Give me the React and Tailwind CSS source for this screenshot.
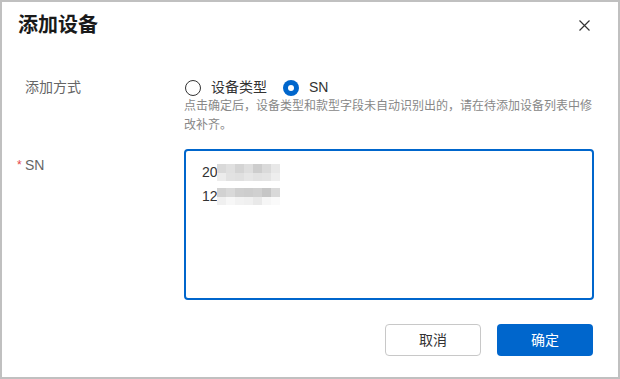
export default function App() {
  const font = { fontFamily: '"Liberation Sans", "Noto Sans CJK SC", sans-serif' };
  const blur1 = ["#d9d9d9", "#e0e0e0", "#d4d4d4", "#dedede", "#cdcdcd", "#dadada", "#e8e8e8"];
  const blur1b = ["#ececec", "#e2e2e2", "#e0e0e0", "#e6e6e6", "#e2e2e2", "#e4e4e4", "#eeeeee"];
  const blur2 = ["#d2d2d2", "#d9d9d9", "#cfcfcf", "#cdcdcd", "#d0d0d0", "#c6c6c6", "#d9d9d9"];
  const blur2b = ["#f0f0f0", "#f7f7f7", "#f2f2f2", "#f0f0f0", "#e9e9e9", "#f6f6f6", "#fafafa"];

  const Blur = ({ top, bottom }) => (
    <span className="inline-flex flex-col -ml-[1px] align-middle">
      <span className="flex">
        {top.map((c, i) => (
          <span key={i} className="w-[9px] h-[9px]" style={{ background: c }} />
        ))}
      </span>
      <span className="flex">
        {bottom.map((c, i) => (
          <span key={i} className="w-[9px] h-[8px]" style={{ background: c }} />
        ))}
      </span>
    </span>
  );

  return (
    <div
      className="w-[620px] h-[379px] border-2 border-[#c0c0c0] bg-white flex flex-col text-[#333]"
      style={font}
    >
      <div className="flex items-center justify-between pl-[16px] pr-[28px] pt-[10px] h-[48px] shrink-0">
        <div className="text-[20px] leading-[28px] font-bold text-[#1a1a1a] -mt-[12px]">添加设备</div>
        <svg width="11" height="11" viewBox="0 0 11 11" className="-mt-[12px]">
          <path d="M0.5 0.5 L10.5 10.5 M10.5 0.5 L0.5 10.5" stroke="#333" strokeWidth="1.2" />
        </svg>
      </div>

      <div className="flex mt-[28px]">
        <div className="w-[182px] shrink-0 pl-[23px] text-[14px] leading-[19px] text-[#666]">添加方式</div>
        <div className="flex flex-col">
          <div className="flex items-center h-[19px] text-[14px] text-[#333]">
            <span className="w-[16px] h-[16px] rounded-full border-[1.5px] border-[#333] ml-[1px]" />
            <span className="ml-[10px]">设备类型</span>
            <span className="w-[16px] h-[16px] rounded-full bg-[#0066cc] flex items-center justify-center ml-[16px]">
              <span className="w-[6px] h-[6px] rounded-full bg-white" />
            </span>
            <span className="ml-[10px]">SN</span>
          </div>
          <div className="whitespace-nowrap text-[12px] leading-[19px] text-[#888]">
            点击确定后，设备类型和款型字段未自动识别出的，请在待添加设备列表中修
            <br />
            改补齐。
          </div>
        </div>
      </div>

      <div className="flex mt-[14px]">
        <div className="w-[182px] shrink-0 pl-[15px] pt-[6px] text-[14px] leading-[20px] text-[#666] flex">
          <span className="w-[8px] text-[#e54545] text-[12px]">*</span>
          <span>SN</span>
        </div>
        <div className="w-[410px] h-[151px] border-2 border-[#0066cc] rounded-[4px] pl-[16px] pt-[9px] text-[14px] text-[#333]">
          <div className="flex items-center h-[24px]">
            <span>20</span>
            <Blur top={blur1} bottom={blur1b} />
          </div>
          <div className="flex items-center h-[24px]">
            <span>12</span>
            <Blur top={blur2} bottom={blur2b} />
          </div>
        </div>
      </div>

      <div className="flex justify-end gap-[16px] pr-[25px] mt-[24px]">
        <button className="w-[96px] h-[32px] rounded-[4px] border border-[#c8c8c8] bg-white text-[14px] text-[#333]">
          取消
        </button>
        <button className="w-[96px] h-[32px] rounded-[4px] bg-[#0066cc] text-[14px] text-white">
          确定
        </button>
      </div>
    </div>
  );
}
